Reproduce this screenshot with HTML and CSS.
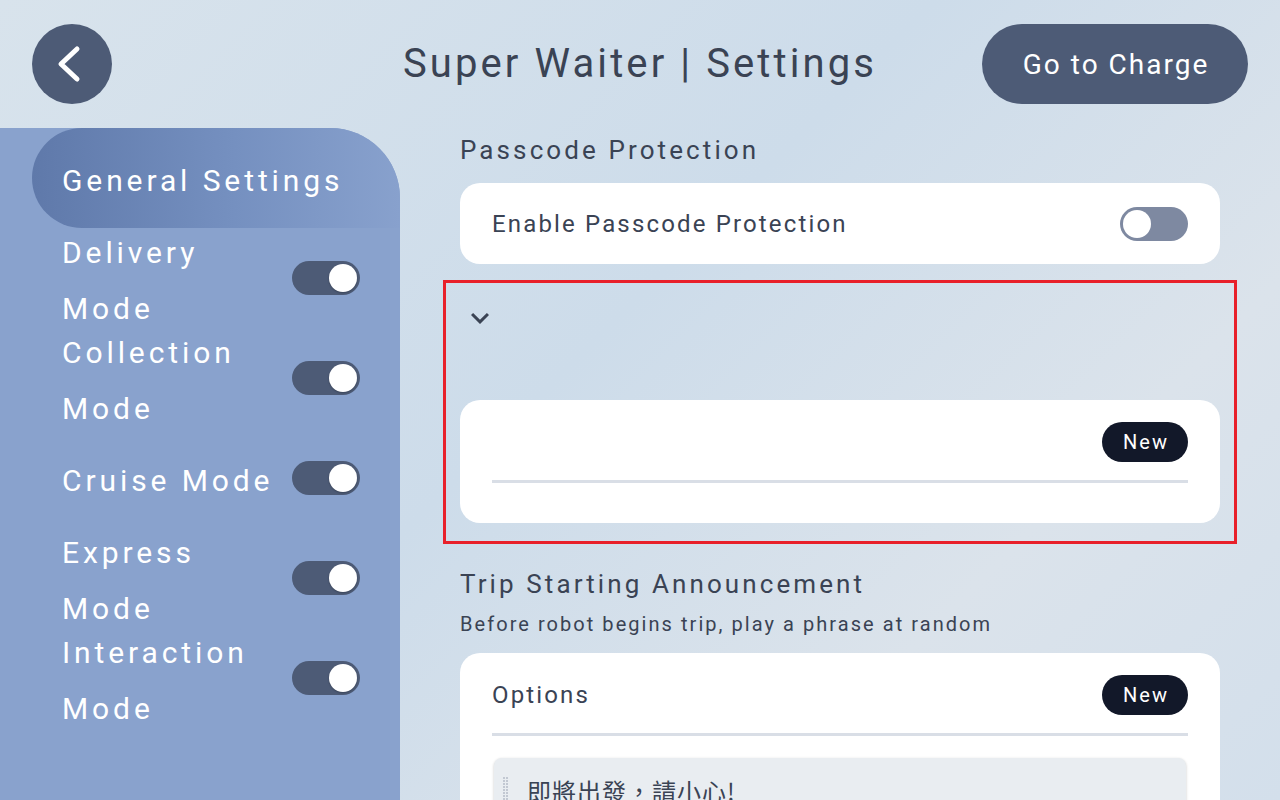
FILE: index.html
```html
<!DOCTYPE html>
<html lang="en">
<head>
<meta charset="utf-8">
<title>Super Waiter | Settings</title>
<link rel="stylesheet" href="styles.css">
</head>
<body>
<div class="app">
  <header class="topbar">
    <div class="top-left">
      <button class="back-btn" aria-label="Back">
        <svg width="80" height="80" viewBox="0 0 80 80"><path d="M45 25 L29 40 L45 55" fill="none" stroke="#fff" stroke-width="5" stroke-linecap="round" stroke-linejoin="round"/></svg>
      </button>
    </div>
    <h1 class="title">Super Waiter | Settings</h1>
    <div class="top-right">
      <button class="charge-btn">Go to Charge</button>
    </div>
  </header>
  <div class="main-area">
    <nav class="sidebar">
      <div class="nav-item active">General Settings</div>
      <div class="nav-row"><span class="nav-label">Delivery Mode</span><span class="toggle on"></span></div>
      <div class="nav-row"><span class="nav-label">Collection Mode</span><span class="toggle on"></span></div>
      <div class="nav-row"><span class="nav-label">Cruise Mode</span><span class="toggle on"></span></div>
      <div class="nav-row"><span class="nav-label">Express Mode</span><span class="toggle on"></span></div>
      <div class="nav-row"><span class="nav-label">Interaction Mode</span><span class="toggle on"></span></div>
    </nav>
    <main class="content">
      <h2 class="section-title first">Passcode Protection</h2>
      <div class="card">
        <div class="card-row">
          <span class="label">Enable Passcode Protection</span>
          <span class="toggle off"></span>
        </div>
      </div>
      <section class="highlight">
        <div class="collapse-head">
          <svg class="chev" width="36" height="36" viewBox="0 0 24 24"><path d="M16.59 8.59L12 13.17 7.41 8.59 6 10l6 6 6-6z" fill="#3a4354"/></svg>
        </div>
        <div class="card list-card">
          <div class="list-head"><span class="label"></span><button class="pill">New</button></div>
          <div class="divider"></div>
          <div class="list-empty"></div>
        </div>
      </section>
      <h2 class="section-title trip">Trip Starting Announcement</h2>
      <p class="section-sub">Before robot begins trip, play a phrase at random</p>
      <div class="card list-card">
        <div class="list-head"><span class="label">Options</span><button class="pill">New</button></div>
        <div class="divider"></div>
        <div class="phrase">
          <span class="handle"></span>
          <span class="phrase-text">即將出發，請小心!</span>
        </div>
      </div>
    </main>
  </div>
</div>
</body>
</html>
```
FILE: styles.css
```css
* {
  box-sizing: border-box;
  margin: 0;
  padding: 0;
}

html, body {
  width: 1280px;
  height: 800px;
  overflow: hidden;
}

body {
  font-family: Roboto, "Noto Sans CJK TC", sans-serif;
  color: #3a4354;
  background: linear-gradient(135deg, #d8e3ec 0%, #cddcea 45%, #dbe3eb 75%, #d3dfeb 100%);
}

button {
  font-family: inherit;
  border: none;
  cursor: pointer;
}

.app {
  width: 1280px;
  height: 800px;
  display: flex;
  flex-direction: column;
}

/* ---------- top bar ---------- */
.topbar {
  height: 128px;
  flex: none;
  display: grid;
  grid-template-columns: 1fr auto 1fr;
  align-items: center;
  padding: 24px 32px;
}

.top-left {
  justify-self: start;
}

.top-right {
  justify-self: end;
}

.back-btn {
  width: 80px;
  height: 80px;
  border-radius: 50%;
  background: #4d5b76;
  display: flex;
  align-items: center;
  justify-content: center;
}

.back-btn svg {
  display: block;
}

.title {
  font-size: 40px;
  font-weight: 400;
  letter-spacing: 3.1px;
  line-height: 48px;
  color: #3a4354;
  white-space: nowrap;
}

.charge-btn {
  width: 266px;
  height: 80px;
  border-radius: 40px;
  background: #4d5b76;
  color: #fff;
  font-size: 28px;
  letter-spacing: 2px;
  padding-left: 2px;
}

/* ---------- sidebar ---------- */
.main-area {
  flex: 1;
  display: flex;
  min-height: 0;
}

.sidebar {
  width: 400px;
  flex: none;
  background: #89a2cd;
  border-top-right-radius: 70px;
  color: #fff;
  font-size: 30px;
  letter-spacing: 3.9px;
}

.nav-item.active {
  margin-left: 32px;
  height: 100px;
  padding: 6px 0 0 30px;
  line-height: 94px;
  border-radius: 50px 70px 0 50px;
  background: linear-gradient(90deg, #5f79aa 0%, #7590c0 55%, #88a1cd 100%);
  white-space: nowrap;
}

.nav-row {
  height: 100px;
  display: flex;
  align-items: center;
  gap: 8px;
  padding: 0 40px 0 62px;
}

.nav-label {
  flex: 1;
  min-width: 0;
  line-height: 56px;
  margin-top: 5px;
}

/* ---------- toggle ---------- */
.toggle {
  position: relative;
  width: 68px;
  height: 34px;
  flex: none;
  border-radius: 17px;
  background: #4d5b76;
}

.toggle::after {
  content: "";
  position: absolute;
  top: 3px;
  width: 28px;
  height: 28px;
  border-radius: 50%;
  background: #fff;
  box-shadow: 0 1px 2px rgba(0, 0, 0, 0.25);
}

.toggle.on::after {
  right: 3px;
}

.toggle.off {
  background: #7e89a1;
}

.toggle.off::after {
  left: 3px;
  box-shadow: none;
}

/* ---------- content ---------- */
.content {
  flex: 1;
  min-width: 0;
  padding: 0 60px;
  overflow: hidden;
}

.section-title {
  font-size: 26px;
  font-weight: 400;
  letter-spacing: 3.1px;
  line-height: 44px;
  white-space: nowrap;
}

.section-title.first {
  margin-bottom: 11px;
}

.section-title.trip {
  margin-top: 18px;
}

.section-sub {
  margin: 4px 0 15px;
  font-size: 20px;
  letter-spacing: 2.05px;
  line-height: 28px;
  white-space: nowrap;
}

.card {
  background: #fff;
  border-radius: 20px;
  padding: 0 32px;
}

.card-row {
  height: 81px;
  margin-bottom: -1px;
  background: #fff;
  display: flex;
  align-items: center;
  justify-content: space-between;
}

.label {
  font-size: 24px;
  letter-spacing: 2.15px;
  white-space: nowrap;
}

.highlight {
  margin: 17px -17px 0;
  border: 3px solid #e8202a;
  padding: 0 14px 18px;
}

.collapse-head {
  height: 117px;
  padding: 17px 0 0 2px;
}

.chev {
  display: block;
}

.list-card {
  padding-top: 22px;
}

.list-head {
  height: 40px;
  display: flex;
  align-items: center;
  justify-content: space-between;
}

.pill {
  width: 86px;
  height: 40px;
  border-radius: 20px;
  background: #121829;
  color: #fff;
  font-size: 20px;
  letter-spacing: 2px;
  padding-left: 2px;
}

.divider {
  height: 3px;
  margin-top: 18px;
  background: #d9dee6;
}

.list-empty {
  height: 40px;
}

.list-card .divider + .phrase {
  margin-top: 22px;
}

.phrase {
  margin: 0 2px;
  height: 64px;
  display: flex;
  align-items: flex-start;
  gap: 18px;
  padding: 17px 0 0 9px;
  background: #e9edf1;
  border-radius: 8px;
  box-shadow: 0 1px 3px rgba(0, 0, 0, 0.22);
}

.handle {
  width: 6px;
  height: 30px;
  margin-top: 2px;
  flex: none;
  background-image: radial-gradient(circle at 1px 1px, #c2c8d2 1px, transparent 1.1px);
  background-size: 3px 3px;
}

.phrase-text {
  font-family: "Noto Sans CJK TC", Roboto, sans-serif;
  font-size: 24px;
  letter-spacing: 1px;
  line-height: 32px;
  color: #3a4354;
}
```
